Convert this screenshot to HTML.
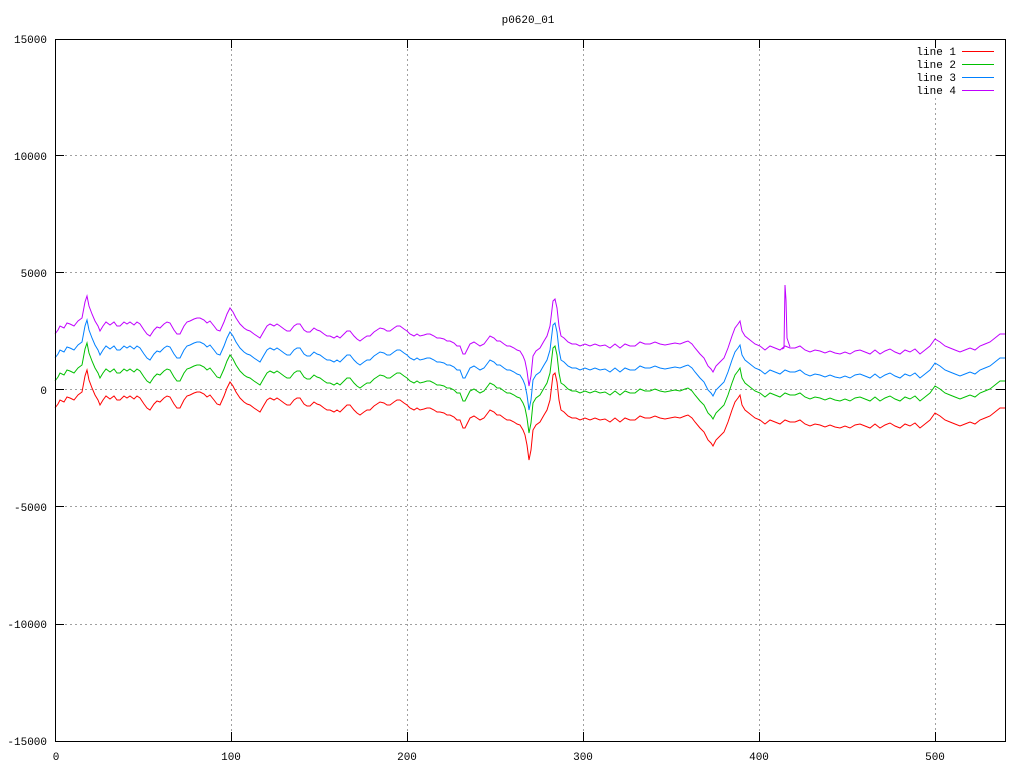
<!DOCTYPE html>
<html><head><meta charset="utf-8"><style>
html,body{margin:0;padding:0;background:#fff;}
svg{display:block;}
text{font-family:"Liberation Mono","DejaVu Sans Mono",monospace;font-size:11px;fill:#000;}
</style></head><body>
<svg width="1024" height="768" viewBox="0 0 1024 768" xmlns="http://www.w3.org/2000/svg">
<defs>
<polyline id="base" fill="none" stroke-width="1" points="55,408 58,404 60,400 64,402 67,397 70,398 74,400 78,395 82,392 85,376 87,370 89,380 92,388 95,395 98,400 100,405 103,400 106,396 110,399 114,396 117,400 120,400 124,396 127,398 130,396 134,399 137,396 140,398 144,404 147,408 150,410 154,404 157,401 160,402 164,398 167,396 170,397 174,404 177,408 180,408 184,400 187,396 190,395 194,393 197,392 200,392 204,394 207,397 210,395 214,400 217,404 220,405 224,396 227,388 230,382 233,386 236,392 240,398 244,402 247,404 250,405 254,408 257,410 260,412 264,405 267,400 270,398 274,400 277,398 280,400 284,403 287,405 290,405 294,400 297,398 300,398 304,404 307,406 310,406 314,402 317,404 320,405 324,408 327,410 330,410 334,412 337,410 340,412 344,408 347,405 350,405 354,410 357,413 360,415 364,412 367,410 370,410 374,406 377,404 380,402 384,403 387,405 390,405 394,402 397,400 400,400 404,403 407,405 410,408 414,410 417,408 420,410 424,409 427,408 430,408 434,410 437,412 440,412 444,413 447,415 450,415 454,417 457,420 460,420 463,428 465,428 468,422 470,418 474,416 477,418 480,420 484,418 487,414 490,410 494,412 497,415 500,415 504,418 507,420 510,420 514,422 517,424 520,425 523,430 525,435 527,445 529,460 531,450 533,430 536,425 540,422 544,415 547,410 550,400 553,375 555,373 557,382 559,400 561,410 564,412 568,416 572,418 576,418 580,420 585,418 590,420 595,418 600,420 605,419 610,422 615,418 620,422 625,418 630,420 635,420 640,416 645,418 650,418 655,416 660,418 665,419 670,418 675,417 680,418 685,416 688,415 692,418 695,422 700,428 704,432 708,440 711,443 713,446 716,440 720,436 724,432 728,422 732,410 735,402 738,398 740,395 742,405 745,410 750,414 755,418 760,420 765,424 770,420 775,422 780,424 785,420 790,422 795,422 800,420 805,424 810,426 815,424 820,425 825,427 830,425 835,427 840,428 845,426 850,428 855,425 860,424 865,426 870,428 875,424 880,428 885,425 890,423 895,426 900,428 905,424 910,426 915,423 920,428 925,424 930,420 935,413 940,416 945,420 950,422 955,424 960,426 965,424 970,422 975,424 980,420 985,418 990,416 995,412 1000,408 1005,408"/>
</defs>
<g stroke="#a0a0a0" stroke-width="1" stroke-dasharray="2,3" fill="none">
<line x1="55" y1="155.5" x2="1005" y2="155.5"/>
<line x1="55" y1="272.5" x2="1005" y2="272.5"/>
<line x1="55" y1="389.5" x2="1005" y2="389.5"/>
<line x1="55" y1="506.5" x2="1005" y2="506.5"/>
<line x1="55" y1="624.5" x2="1005" y2="624.5"/>
<line x1="231.5" y1="39" x2="231.5" y2="741"/>
<line x1="407.5" y1="39" x2="407.5" y2="741"/>
<line x1="583.5" y1="39" x2="583.5" y2="741"/>
<line x1="759.5" y1="39" x2="759.5" y2="741"/>
<line x1="935.5" y1="98" x2="935.5" y2="741"/>
</g>
<use href="#base" stroke="#c000ff" transform="translate(0,-74)"/>
<polyline fill="none" stroke="#c000ff" stroke-width="1" points="782,349 784,348 785,285 786,300 787,338 790,347"/>
<use href="#base" stroke="#0080ff" transform="translate(0,-50)"/>
<use href="#base" stroke="#00c000" transform="translate(0,-27)"/>
<use href="#base" stroke="#ff0000"/>
<rect x="55.5" y="39.5" width="950" height="702" fill="none" stroke="#000" stroke-width="1"/>
<g stroke="#000" stroke-width="1">
<line x1="55" y1="155.5" x2="64" y2="155.5"/><line x1="996" y1="155.5" x2="1005" y2="155.5"/>
<line x1="55" y1="272.5" x2="64" y2="272.5"/><line x1="996" y1="272.5" x2="1005" y2="272.5"/>
<line x1="55" y1="389.5" x2="64" y2="389.5"/><line x1="996" y1="389.5" x2="1005" y2="389.5"/>
<line x1="55" y1="506.5" x2="64" y2="506.5"/><line x1="996" y1="506.5" x2="1005" y2="506.5"/>
<line x1="55" y1="624.5" x2="64" y2="624.5"/><line x1="996" y1="624.5" x2="1005" y2="624.5"/>
<line x1="231.5" y1="741" x2="231.5" y2="732"/><line x1="231.5" y1="39" x2="231.5" y2="48"/>
<line x1="407.5" y1="741" x2="407.5" y2="732"/><line x1="407.5" y1="39" x2="407.5" y2="48"/>
<line x1="583.5" y1="741" x2="583.5" y2="732"/><line x1="583.5" y1="39" x2="583.5" y2="48"/>
<line x1="759.5" y1="741" x2="759.5" y2="732"/><line x1="759.5" y1="39" x2="759.5" y2="48"/>
<line x1="935.5" y1="741" x2="935.5" y2="732"/><line x1="935.5" y1="39" x2="935.5" y2="48"/>
</g>
<g text-anchor="end">
<text x="47" y="43">15000</text>
<text x="47" y="160">10000</text>
<text x="47" y="277">5000</text>
<text x="47" y="394">0</text>
<text x="47" y="511">-5000</text>
<text x="47" y="628">-10000</text>
<text x="47" y="745">-15000</text>
</g>
<g text-anchor="middle">
<text x="56" y="760">0</text>
<text x="231" y="760">100</text>
<text x="407" y="760">200</text>
<text x="583" y="760">300</text>
<text x="759" y="760">400</text>
<text x="935" y="760">500</text>
<text x="528" y="23">p0620_01</text>
</g>
<g text-anchor="end">
<text x="956" y="55">line 1</text>
<text x="956" y="68">line 2</text>
<text x="956" y="81">line 3</text>
<text x="956" y="94">line 4</text>
</g>
<g stroke-width="1">
<line x1="962" y1="51.5" x2="994" y2="51.5" stroke="#ff0000"/>
<line x1="962" y1="64.5" x2="994" y2="64.5" stroke="#00c000"/>
<line x1="962" y1="77.5" x2="994" y2="77.5" stroke="#0080ff"/>
<line x1="962" y1="90.5" x2="994" y2="90.5" stroke="#c000ff"/>
</g>
</svg>
</body></html>
